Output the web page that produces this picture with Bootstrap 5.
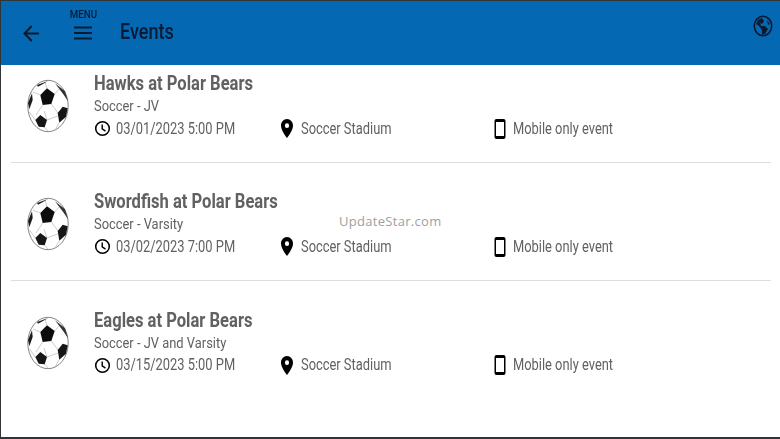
<!doctype html>
<html lang="en"><head><meta charset="utf-8"><title>Events</title>
<link rel="stylesheet" href="https://cdn.jsdelivr.net/npm/bootstrap@5.3.0/dist/css/bootstrap.min.css">
<style>
html,body{height:100%;margin:0;background:#fff;overflow:hidden}
body{font-family:Roboto,"Liberation Sans",sans-serif}
.app-frame{height:439px;border:solid #30353a;border-width:1px 0 2px 1px;position:relative;background:#fff}
.app-bar{height:64px;background:#0568b3;color:#0b1a33;padding:0;flex-wrap:nowrap;align-items:stretch}
.back-btn{width:61px;padding:0 0 0 22px;display:flex;align-items:center;margin-top:0}
.menu-btn{width:58px;display:flex;flex-direction:column;align-items:center;padding:0 16px 0 0}
.menu-label{font-size:11px;line-height:12px;margin-top:8px;font-weight:500;transform:scaleX(.88)}
.menu-btn svg{margin-top:5px}
.bar-title{font-size:22px;font-weight:500;margin:1px 0 0;line-height:60px;transform:scaleX(.82);transform-origin:left center;color:#0b1a33}
.globe-btn{position:absolute;right:7px;top:14px;display:flex}
.event-list{margin:0 9px 0 10px}
.event-row{height:118.5px;padding:20.5px 0 0;border-color:#ddd;background:transparent;flex-wrap:nowrap}
.event-row:first-child{height:97.5px;padding-top:0}
.ball-cell{width:83px;padding-left:15px;padding-top:14px;flex:none}
.event-body{padding-top:6px;color:#616161}
.event-title{font-size:20px;font-weight:700;line-height:24px;margin:0;color:#616161;transform:scaleX(.828);transform-origin:left center;white-space:nowrap}
.event-sub{font-size:15px;line-height:22px;margin-top:0;transform:scaleX(.86);transform-origin:left center;white-space:nowrap}
.meta-row{height:22px;margin-top:.5px;font-size:16px}
.meta-item{display:flex;align-items:center;flex:none;white-space:nowrap}
.meta-time{width:187px}.meta-place{width:213px}
.meta-time svg{margin-right:5px}.meta-place svg{margin-right:8px}.meta-item .ph{margin-right:7px}
.meta-text{display:inline-block;transform:scaleX(.805);transform-origin:left center}
.watermark{position:absolute;left:338px;top:211px;font-size:13px;letter-spacing:.3px;color:#a0a0a0;line-height:18px;font-family:"Open Sans",sans-serif}
</style></head>
<body>
<svg width="0" height="0" class="position-absolute">
<defs>
<filter id="soft" x="-5%" y="-5%" width="110%" height="110%"><feGaussianBlur stdDeviation=".5"/></filter>
<symbol id="ball" viewBox="0 0 44 54">
<g filter="url(#soft)">
<ellipse cx="22" cy="27" rx="20.2" ry="25.700" fill="#fff" stroke="#666" stroke-width=".8"/>
<path d="M21 9.300 19 3M28.700 15 34 9M14.300 16 7 13M16.700 26 10 36M25.300 25 32 34M21 41 32 37M33 44 29 51M18.700 48.300 22 52M9.300 41 3.500 33M21 41 18 32" stroke="#aaa" stroke-width=".6" fill="none"/>
<path d="M21 9.300 28.700 15 25.300 25 16.700 26 14.300 16Z" fill="#111"/>
<path d="M36.700 27.700 41.700 29.300 40 37.700 33.300 43.700 31.700 34Z" fill="#181818"/>
<path d="M14.300 36 21 41 18.700 48.300 12.700 47.700 9.300 41Z" fill="#181818"/>
<path d="M6 14.300 6.700 21 3.300 30.300 2 24Z" fill="#1c1c1c"/>
<path d="M11 6 22 2 17 5 12 7.700Z" fill="#222"/>
<path d="M29 4.300 39 12.300 42 22.300 37.700 15.700Z" fill="#333"/>
</g>
</symbol>
<symbol id="clock" viewBox="0 0 24 24"><circle cx="12" cy="12" r="9.600" fill="none" stroke="#000" stroke-width="2.200"/><path d="M11.600 6.500V12.600L16.200 15.600" fill="none" stroke="#000" stroke-width="2"/></symbol>
<symbol id="pin" viewBox="0 0 24 24"><path fill="#000" d="M12 2C8 2 5 5.100 5 9c0 5.200 7 13 7 13s7-7.800 7-13c0-3.900-3-7-7-7zm0 9.500A2.500 2.500 0 1 1 12 6.500a2.500 2.500 0 0 1 0 5z"/></symbol>
<symbol id="phone" viewBox="0 0 12 20"><path fill="#000" d="M2.500 0h7A2 2 0 0 1 11.500 2v16a2 2 0 0 1-2 2h-7a2 2 0 0 1-2-2V2a2 2 0 0 1 2-2zM2 3v14h8V3z" fill-rule="evenodd"/></symbol>
</defs></svg>
<div class="app-frame">
<nav class="navbar app-bar d-flex justify-content-start">
<div class="back-btn"><svg width="16" height="17" viewBox="0 0 16 17"><path d="M16 8.500H2M8.700 1 1.500 8.500 8.700 16" fill="none" stroke="#0b1a33" stroke-width="2"/></svg></div>
<div class="menu-btn"><span class="menu-label">MENU</span><svg width="18" height="14" viewBox="0 0 18 14"><path d="M0 1.500H18M0 7H18M0 12.500H18" stroke="#0b1a33" stroke-width="2"/></svg></div>
<h1 class="bar-title">Events</h1>
<div class="globe-btn"><svg width="20" height="22" viewBox="0 0 20 22"><ellipse cx="10" cy="11" rx="8.700" ry="9.700" fill="#0568b3" stroke="#0b1a33" stroke-width="1.600"/><path d="M5 5 9 3 11 6 9 9 7 8 8 11 12 11 15 14 12 19 9 20 9 15 6 11 3 9Z" fill="#0b1a33"/><path d="M14 5 17 9 15 10Z" fill="#0b1a33"/></svg></div>
</nav>
<div class="list-group list-group-flush event-list">
<div class="list-group-item event-row d-flex">
<div class="ball-cell"><svg width="44" height="54"><use href="#ball"/></svg></div>
<div class="event-body"><h2 class="event-title">Hawks at Polar Bears</h2><div class="event-sub">Soccer - JV</div>
<div class="meta-row d-flex"><div class="meta-item meta-time"><svg width="17" height="17"><use href="#clock"/></svg><span class="meta-text">03/01/2023 5:00 PM</span></div><div class="meta-item meta-place"><svg width="12" height="19" viewBox="5 2 14 20" preserveAspectRatio="none"><use href="#pin" width="24" height="24"/></svg><span class="meta-text">Soccer Stadium</span></div><div class="meta-item"><svg class="ph" width="12" height="20"><use href="#phone"/></svg><span class="meta-text">Mobile only event</span></div></div></div>
</div>
<div class="list-group-item event-row d-flex">
<div class="ball-cell"><svg width="44" height="54"><use href="#ball"/></svg></div>
<div class="event-body"><h2 class="event-title">Swordfish at Polar Bears</h2><div class="event-sub">Soccer - Varsity</div>
<div class="meta-row d-flex"><div class="meta-item meta-time"><svg width="17" height="17"><use href="#clock"/></svg><span class="meta-text">03/02/2023 7:00 PM</span></div><div class="meta-item meta-place"><svg width="12" height="19" viewBox="5 2 14 20" preserveAspectRatio="none"><use href="#pin" width="24" height="24"/></svg><span class="meta-text">Soccer Stadium</span></div><div class="meta-item"><svg class="ph" width="12" height="20"><use href="#phone"/></svg><span class="meta-text">Mobile only event</span></div></div></div>
</div>
<div class="list-group-item event-row d-flex">
<div class="ball-cell"><svg width="44" height="54"><use href="#ball"/></svg></div>
<div class="event-body"><h2 class="event-title">Eagles at Polar Bears</h2><div class="event-sub">Soccer - JV and Varsity</div>
<div class="meta-row d-flex"><div class="meta-item meta-time"><svg width="17" height="17"><use href="#clock"/></svg><span class="meta-text">03/15/2023 5:00 PM</span></div><div class="meta-item meta-place"><svg width="12" height="19" viewBox="5 2 14 20" preserveAspectRatio="none"><use href="#pin" width="24" height="24"/></svg><span class="meta-text">Soccer Stadium</span></div><div class="meta-item"><svg class="ph" width="12" height="20"><use href="#phone"/></svg><span class="meta-text">Mobile only event</span></div></div></div>
</div>
</div>
<div class="watermark">UpdateStar.com</div>
</div>
<script src="https://cdn.jsdelivr.net/npm/bootstrap@5.3.0/dist/js/bootstrap.bundle.min.js"></script>
</body></html>
